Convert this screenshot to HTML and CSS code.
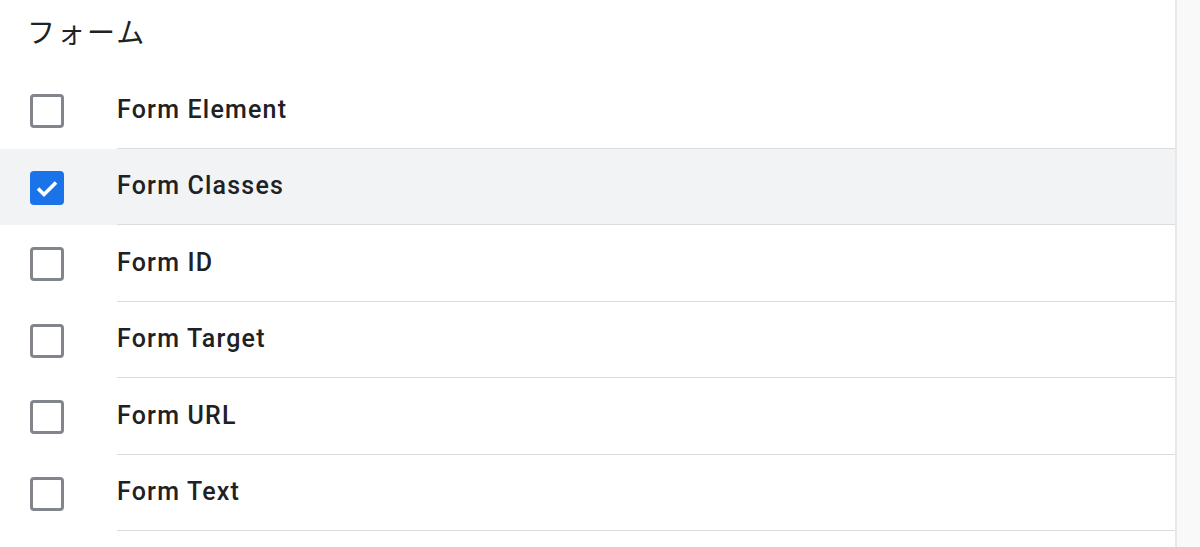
FILE: index.html
```html
<!DOCTYPE html>
<html lang="ja">
<head>
<meta charset="utf-8">
<link rel="stylesheet" href="styles.css">
</head>
<body>
<div class="page">
  <main class="panel">
    <h2 class="title">フォーム</h2>
    <ul class="list">
      <li class="row">
        <div class="cb-cell"><span class="cb"></span></div>
        <div class="label">Form Element</div>
      </li>
      <li class="row row-active">
        <div class="cb-cell"><span class="cb cb-checked"><svg viewBox="0 0 34 34" width="34" height="34"><path d="M8 17.5l6 6 12-12" fill="none" stroke="#fff" stroke-width="3.6"/></svg></span></div>
        <div class="label">Form Classes</div>
      </li>
      <li class="row">
        <div class="cb-cell"><span class="cb"></span></div>
        <div class="label">Form ID</div>
      </li>
      <li class="row">
        <div class="cb-cell"><span class="cb"></span></div>
        <div class="label">Form Target</div>
      </li>
      <li class="row">
        <div class="cb-cell"><span class="cb"></span></div>
        <div class="label">Form URL</div>
      </li>
      <li class="row">
        <div class="cb-cell"><span class="cb"></span></div>
        <div class="label">Form Text</div>
      </li>
    </ul>
  </main>
  <aside class="side"></aside>
</div>
</body>
</html>
```

FILE: styles.css
```css
html, body {
  margin: 0;
  padding: 0;
  background: #ffffff;
}
body {
  font-family: Roboto, "Noto Sans CJK JP", sans-serif;
  color: #202124;
  overflow: hidden;
}
.page {
  display: flex;
  width: 1200px;
  height: 547px;
}
.panel {
  width: 1175px;
  border-right: 2px solid #e8e8e8;
  background: #fff;
}
.side {
  flex: 1;
  background: #f9f9f9;
}
.title {
  margin: 0;
  height: 72px;
  box-sizing: border-box;
  padding: 11px 0 0 27px;
  font-family: "Noto Sans CJK JP", sans-serif;
  font-weight: 400;
  font-size: 28px;
  line-height: 40px;
  letter-spacing: 2px;
  color: #202124;
}
.list {
  list-style: none;
  margin: 0;
  padding: 0;
}
.row {
  display: flex;
  height: 76.5px;
}
.row-active {
  background: #f1f3f4;
}
.cb-cell {
  width: 117px;
  box-sizing: border-box;
  padding-left: 30px;
  display: flex;
  align-items: center;
}
.cb {
  width: 34px;
  height: 34px;
  box-sizing: border-box;
  border: 3px solid #80868b;
  border-radius: 4px;
  display: block;
  position: relative;
  top: 1px;
}
.cb-checked {
  border: none;
  background: #1a73e8;
}
.cb-checked svg {
  display: block;
}
.label {
  flex: 1;
  display: flex;
  align-items: center;
  border-bottom: 1px solid #dadce0;
  font-size: 25px;
  font-weight: 500;
  letter-spacing: 1.2px;
  color: #202124;
  padding-bottom: 1px;
}
```
